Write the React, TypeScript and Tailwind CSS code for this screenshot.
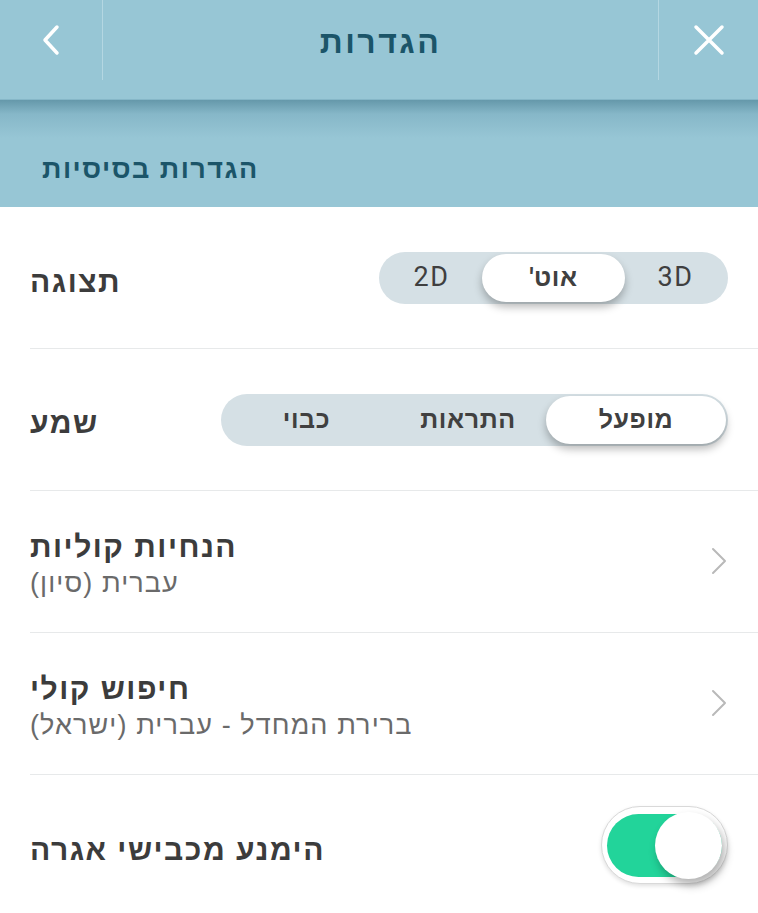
import type { ReactNode } from 'react'

// ─── Constants ────────────────────────────────────────────────────────────────

const FONT = { fontFamily: '"Liberation Sans", "DejaVu Sans", sans-serif' }

// ─── Sub-components ───────────────────────────────────────────────────────────

function Segmented({
  items,
  widths,
  selected,
}: {
  items: string[]
  widths: number[]
  selected: number
}) {
  return (
    <div className="flex h-[52px] items-stretch rounded-full bg-[#d5e0e5] p-[2px]">
      {items.map((label, i) => {
        const latin = /^[0-9A-Z]+$/.test(label)
        return (
          <div
            key={label}
            style={{ width: widths[i] }}
            className={
              i === selected
                ? 'flex items-center justify-center rounded-full bg-white shadow-[0_5px_9px_rgba(0,0,0,0.28)]'
                : 'flex items-center justify-center'
            }
          >
            <span
              dir="rtl"
              className={
                latin
                  ? 'text-[27px] font-normal tracking-[1.5px] text-[#3f3f3f]'
                  : 'text-[25px] font-bold tracking-[0.6px] text-[#404040]'
              }
              style={{ fontFamily: 'Roboto, "Liberation Sans", sans-serif' }}
            >
              {label}
            </span>
          </div>
        )
      })}
    </div>
  )
}

function Row({ children, last }: { children: ReactNode; last?: boolean }) {
  return (
    <div
      className={
        last
          ? 'ml-[30px] flex h-[140px] items-center justify-between pr-[30px]'
          : 'ml-[30px] flex h-[142px] items-center justify-between border-b border-[#e7e9ea] pr-[30px]'
      }
    >
      {children}
    </div>
  )
}

function Label({ children }: { children: ReactNode }) {
  return (
    <span dir="rtl" className="text-[30px] font-bold leading-[36px] tracking-[1.5px] text-[#3c3c3c]">
      {children}
    </span>
  )
}

function Chevron() {
  return (
    <svg width="18" height="28" viewBox="0 0 18 28" fill="none" className="mt-[-2px]">
      <path d="M3 2 L15 14 L3 26" stroke="#b9b9b9" strokeWidth="2" strokeLinecap="round" strokeLinejoin="round" />
    </svg>
  )
}

function NavRow({ title, subtitle }: { title: string; subtitle: string }) {
  return (
    <Row>
      <div className="flex flex-col items-start pt-[7px]">
        <Label>{title}</Label>
        <span dir="rtl" className="text-[27px] leading-[36px] tracking-[1.1px] text-[#6a6a6a]">
          {subtitle}
        </span>
      </div>
      <Chevron />
    </Row>
  )
}

function Toggle() {
  return (
    <div className="flex h-[78px] w-[127px] items-center rounded-full border border-[#d9d9d9] bg-white px-[5px] shadow-[0_2px_4px_rgba(0,0,0,0.12)]">
      <div className="flex h-[63px] flex-1 items-center justify-end rounded-full bg-[#22d49a]">
        <div className="h-[67px] w-[67px] rounded-full bg-white shadow-[3px_6px_10px_rgba(0,0,0,0.3)]" />
      </div>
    </div>
  )
}

// ─── App ──────────────────────────────────────────────────────────────────────

export default function App() {
  return (
    <div className="h-[913px] w-[758px] overflow-hidden bg-white" style={FONT}>
      <header className="flex h-[100px] items-start border-b border-[#86b7c8] bg-[#97c6d5]">
        <button className="flex h-[80px] w-[103px] items-center justify-center border-r border-[#b4d7e2]">
          <svg width="22" height="32" viewBox="0 0 22 32" fill="none">
            <path d="M17 3 L5 16 L17 29" stroke="white" strokeWidth="3.5" strokeLinecap="round" strokeLinejoin="round" />
          </svg>
        </button>
        <div className="flex h-[80px] flex-1 items-center justify-center pt-[3px]">
          <h1 dir="rtl" className="text-[32px] font-bold tracking-[2.5px] text-[#1b5569]">
            הגדרות
          </h1>
        </div>
        <button className="flex h-[80px] w-[100px] items-center justify-center border-l border-[#b4d7e2]">
          <svg width="32" height="32" viewBox="0 0 32 32" fill="none">
            <path d="M3 3 L29 29 M29 3 L3 29" stroke="white" strokeWidth="3.5" strokeLinecap="round" />
          </svg>
        </button>
      </header>

      <div className="flex h-[107px] items-end bg-[linear-gradient(to_bottom,#6598aa_0px,#86b7c8_14px,#97c6d5_38px)] pb-[18px] pl-[42px]">
        <h2 dir="rtl" className="text-[27px] font-bold tracking-[1.5px] text-[#1b5569]">
          הגדרות בסיסיות
        </h2>
      </div>

      <Row>
        <span className="pt-[8px]">
          <Label>תצוגה</Label>
        </span>
        <Segmented items={['2D', "אוט'", '3D']} widths={[101, 143, 101]} selected={1} />
      </Row>

      <Row>
        <span className="pt-[6px]">
          <Label>שמע</Label>
        </span>
        <Segmented items={['כבוי', 'התראות', 'מופעל']} widths={[167, 156, 180]} selected={2} />
      </Row>

      <NavRow title="הנחיות קוליות" subtitle="עברית (סיון)" />
      <NavRow title="חיפוש קולי" subtitle="ברירת המחדל - עברית (ישראל)" />

      <Row last>
        <span className="pt-[10px]">
          <Label>הימנע מכבישי אגרה</Label>
        </span>
        <Toggle />
      </Row>
    </div>
  )
}
